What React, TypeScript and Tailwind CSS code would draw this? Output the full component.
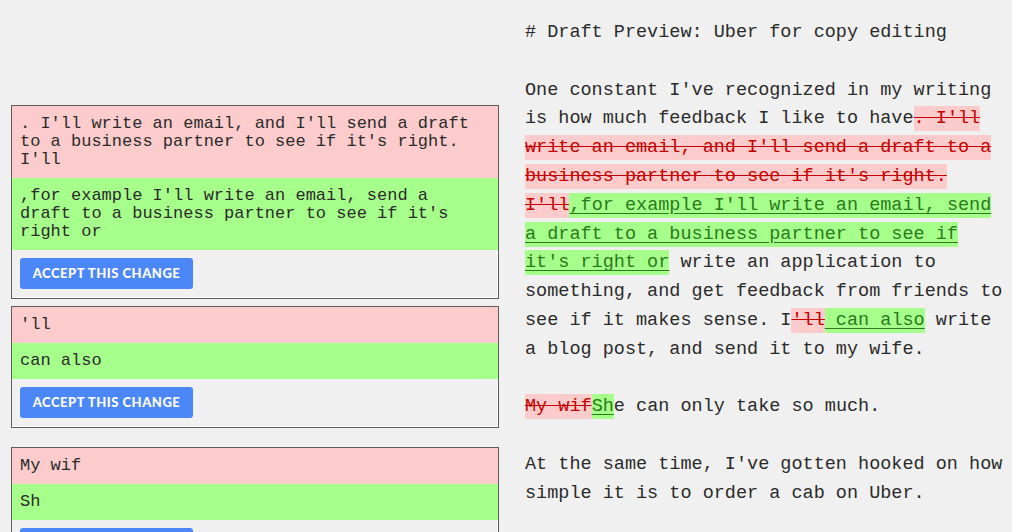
import React from 'react';

type Part = { t: string; kind?: 'del' | 'ins' };

interface Change {
  id: number;
  removed: string;
  added: string;
  gap: string;
}

const changes: Change[] = [
  {
    id: 1,
    removed: ". I'll write an email, and I'll send a draft to a business partner to see if it's right. I'll",
    added: ",for example I'll write an email, send a draft to a business partner to see if it's right or",
    gap: 'mt-0',
  },
  { id: 2, removed: "'ll", added: 'can also', gap: 'mt-[7px]' },
  { id: 3, removed: 'My wif', added: 'Sh', gap: 'mt-[19px]' },
];

// each paragraph of the preview, split into plain, deleted and inserted runs
const paragraphs: Part[][] = [
  [{ t: '# Draft Preview: Uber for copy editing' }],
  [
    { t: "One constant I've recognized in my writing is how much feedback I like to have" },
    { t: ". I'll write an email, and I'll send a draft to a business partner to see if it's right. I'll", kind: 'del' },
    { t: ",for example I'll write an email, send a draft to a business partner to see if it's right or", kind: 'ins' },
    { t: ' write an application to something, and get feedback from friends to see if it makes sense. I' },
    { t: "'ll", kind: 'del' },
    { t: ' can also', kind: 'ins' },
    { t: ' write a blog post, and send it to my wife.' },
  ],
  [{ t: 'My wif', kind: 'del' }, { t: 'Sh', kind: 'ins' }, { t: 'e can only take so much.' }],
  [{ t: "At the same time, I've gotten hooked on how simple it is to order a cab on Uber." }],
];

function ChangeCard({ change }: { change: Change }) {
  return (
    <div className={`${change.gap} border border-[#5c5c5c] shadow-[inset_-1px_-1px_0_#ffffff] bg-[#f0f0f0]`}>
      <div className="bg-[#fccccc] pl-[8px] pr-[20px] py-[9px] text-[17px] leading-[18px] text-[#2b2b2b] whitespace-pre-wrap">
        {change.removed}
      </div>
      <div className="bg-[#a6ff8a] pl-[8px] pr-[20px] py-[9px] text-[17px] leading-[18px] text-[#2b2b2b] whitespace-pre-wrap">
        {change.added}
      </div>
      <div className="px-[8px] pt-[8px] pb-[9px]">
        <button className="w-[173px] h-[31px] rounded-[3px] bg-[#4c87f7] text-white text-[13px] font-black tracking-[0.04em] uppercase [font-family:Lato,'Noto_Sans',sans-serif]">
          Accept this change
        </button>
      </div>
    </div>
  );
}

function Run({ part }: { part: Part }) {
  if (part.kind === 'del') {
    return (
      <span className="bg-[#fccccc] text-[#c40000] line-through decoration-[#c40000] py-[2px] [box-decoration-break:clone]">
        {part.t}
      </span>
    );
  }
  if (part.kind === 'ins') {
    return (
      <span className="bg-[#a6ff8a] text-[#2a7a1c] underline decoration-[#2a7a1c] underline-offset-[3px] py-[2px] [box-decoration-break:clone]">
        {part.t}
      </span>
    );
  }
  return <span>{part.t}</span>;
}

export default function App() {
  return (
    <div className="w-[1012px] h-[532px] overflow-hidden bg-[#f0f0f0] flex [font-family:'Liberation_Mono','DejaVu_Sans_Mono',monospace]">
      {/* suggested edits */}
      <div className="w-[499px] pl-[11px] pt-[105px] flex flex-col shrink-0">
        {changes.map(c => (
          <ChangeCard key={c.id} change={c} />
        ))}
      </div>

      {/* rendered draft with inline diff */}
      <div className="ml-[26px] w-[482px] pt-[19px] text-[18.5px] leading-[28.8px] text-[#2b2b2b] flex flex-col gap-[28.8px]">
        {paragraphs.map((p, i) => (
          <p key={i}>
            {p.map((part, j) => (
              <Run key={j} part={part} />
            ))}
          </p>
        ))}
      </div>
    </div>
  );
}
